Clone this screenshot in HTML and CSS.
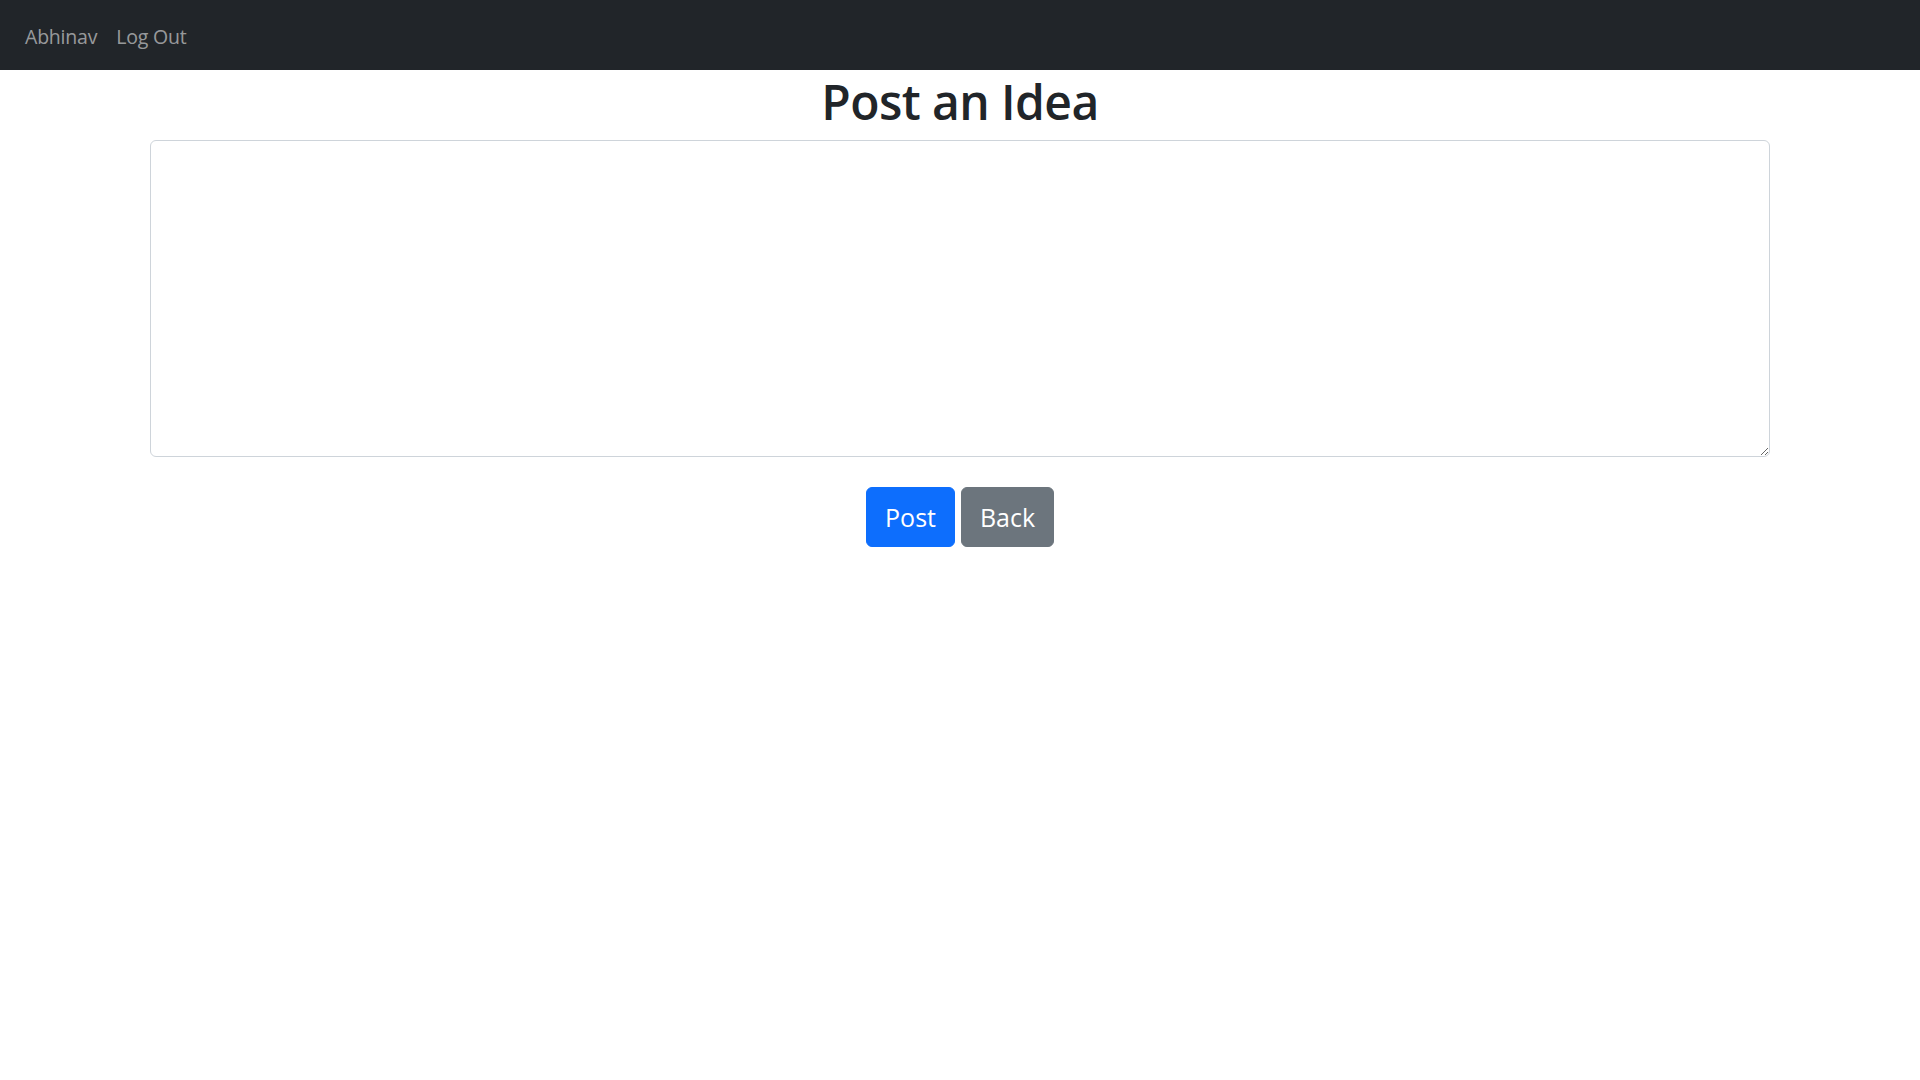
FILE: index.html
```html
<!DOCTYPE html>
<html lang="en">
<head>
<meta charset="utf-8">
<title>Post an Idea</title>
<link rel="stylesheet" href="styles.css">
</head>
<body>
<nav class="navbar">
  <a class="nav-link" href="#">Abhinav</a>
  <a class="nav-link" href="#">Log Out</a>
</nav>
<main class="main">
  <h1 class="title">Post an Idea</h1>
  <textarea class="idea"></textarea>
  <div class="actions">
    <button class="btn btn-primary">Post</button>
    <button class="btn btn-secondary">Back</button>
  </div>
</main>
</body>
</html>
```
FILE: styles.css
```css
* { box-sizing: border-box; }
html, body { margin: 0; padding: 0; background: #fff; }
body {
  font-family: "Open Sans", "Noto Sans", sans-serif;
  color: #212529;
}
.navbar {
  height: 70px;
  background: #212529;
  display: flex;
  align-items: center;
  padding: 2px 25px 0;
  gap: 19px;
}
.nav-link {
  color: rgba(255, 255, 255, 0.55);
  text-decoration: none;
  font-size: 19.5px;
  letter-spacing: -0.2px;
}
.main {
  display: flex;
  flex-direction: column;
  align-items: center;
}
.title {
  margin: 3px 0 9px;
  font-size: 48px;
  font-weight: 600;
  line-height: 1.2;
  letter-spacing: -0.6px;
}
.idea {
  width: 1620px;
  height: 317px;
  border: 1px solid #ced4da;
  border-radius: 6px;
  font-family: inherit;
  font-size: 16px;
  padding: 6px 12px;
  resize: vertical;
}
.actions {
  margin-top: 30px;
  display: flex;
  gap: 6px;
}
.btn {
  height: 60px;
  border: 1px solid transparent;
  border-radius: 6px;
  font-family: inherit;
  font-size: 25px;
  color: #fff;
  padding: 0;
  display: flex;
  align-items: center;
  justify-content: center;
}
.btn-primary { background: #0d6efd; border-color: #0d6efd; width: 89px; }
.btn-secondary { background: #6c757d; border-color: #6c757d; width: 93px; }
```
